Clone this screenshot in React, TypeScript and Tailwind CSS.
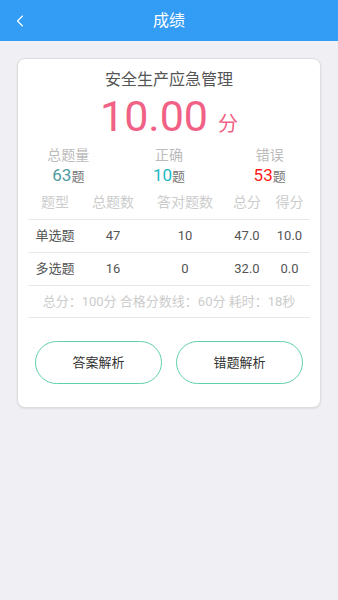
import { ChevronLeft } from 'lucide-react';

const rows = [
  { type: '单选题', total: '47', right: '10', score: '47.0', got: '10.0' },
  { type: '多选题', total: '16', right: '0', score: '32.0', got: '0.0' },
];

const stats = [
  { label: '总题量', value: '63', color: 'text-[#4f9aa3]' },
  { label: '正确', value: '10', color: 'text-[#1bb8c6]' },
  { label: '错误', value: '53', color: 'text-[#ff1a1a]' },
];

const font = { fontFamily: 'Roboto, "Noto Sans CJK SC", sans-serif' };
const cols = 'grid-cols-[54px_62px_82px_42px_43px]';

export default function App() {
  return (
    <div className="h-[600px] w-[338px] bg-[#efeff4]" style={font}>
      <div className="relative flex h-[41px] items-center justify-center bg-[#339cf5]">
        <ChevronLeft className="absolute left-[10px] top-[11px] h-[20px] w-[20px] text-white" strokeWidth={1.4} />
        <span className="text-[16px] text-white">成绩</span>
      </div>

      <div className="mx-[17px] mt-[17px] h-[350px] rounded-[8px] border border-[#dddddd] bg-white px-[10px] shadow-[0_1px_2px_rgba(0,0,0,0.08)]">
        <div className="mt-[9px] h-[24px] text-center text-[16px] leading-[24px] text-[#555555]">
          安全生产应急管理
        </div>
        <div className="flex h-[48px] items-baseline justify-center text-[#f06185]">
          <span className="text-[43px] leading-[48px]">10.00</span>
          <span className="ml-[10px] text-[20px] leading-[48px]">分</span>
        </div>

        <div className="-mx-[10px] mt-[6px] grid grid-cols-3 text-center">
          {stats.map((s) => (
            <div key={s.label}>
              <div className="h-[18px] text-[14px] leading-[18px] text-[#bbbbbb]">{s.label}</div>
              <div className="h-[22px] leading-[22px] text-[#777777]">
                <span className={`text-[17px] ${s.color}`}>{s.value}</span>
                <span className="text-[13px]">题</span>
              </div>
            </div>
          ))}
        </div>

        <div className={`grid h-[33px] ${cols} items-center text-center text-[14px] text-[#cccccc]`}>
          <div>题型</div>
          <div>总题数</div>
          <div>答对题数</div>
          <div>总分</div>
          <div>得分</div>
        </div>
        {rows.map((r) => (
          <div
            key={r.type}
            className={`grid h-[33px] ${cols} items-center border-t border-[#e8e8e8] text-center text-[13px] text-[#555555]`}
          >
            <div>{r.type}</div>
            <div>{r.total}</div>
            <div>{r.right}</div>
            <div>{r.score}</div>
            <div>{r.got}</div>
          </div>
        ))}
        <div className="flex h-[33px] items-center justify-center border-y border-[#e8e8e8] text-[13px] text-[#cccccc]">
          总分：100分 合格分数线：60分 耗时：18秒
        </div>

        <div className="mt-[23px] flex justify-between px-[7px]">
          <button className="h-[43px] w-[127px] rounded-full border-[1.5px] border-[#5fd0a8] text-[13px] text-[#333333]">
            答案解析
          </button>
          <button className="h-[43px] w-[127px] rounded-full border-[1.5px] border-[#5fd0a8] text-[13px] text-[#333333]">
            错题解析
          </button>
        </div>
      </div>
    </div>
  );
}
